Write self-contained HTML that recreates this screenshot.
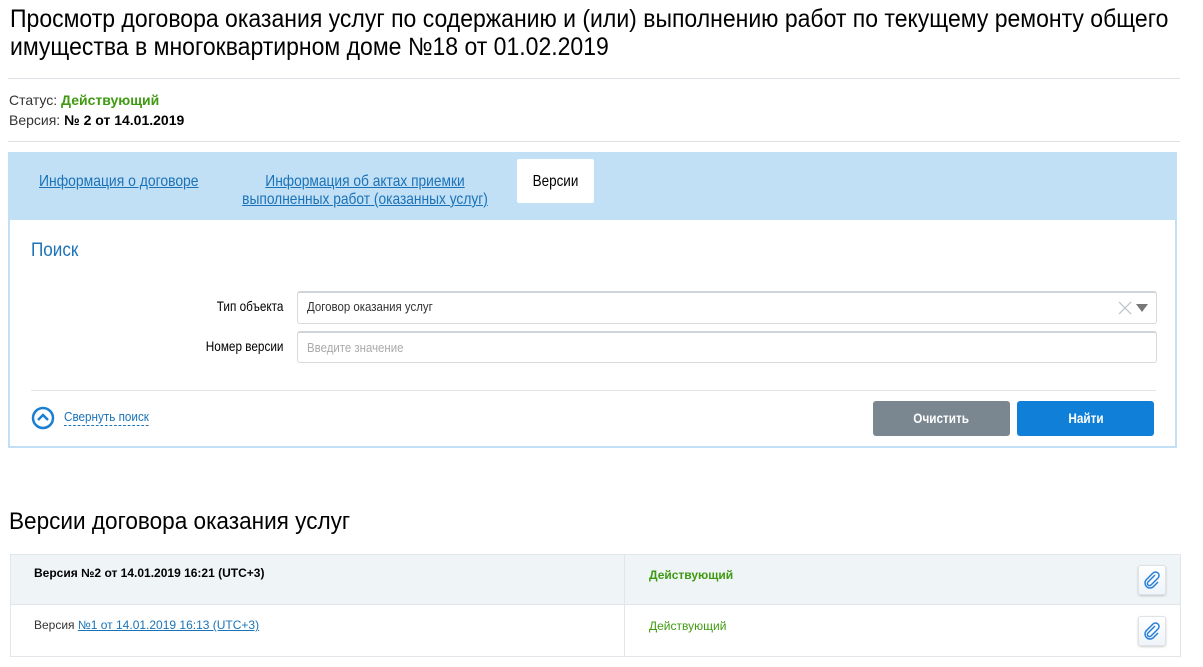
<!DOCTYPE html>
<html><head><meta charset="utf-8"><style>
*{box-sizing:border-box;margin:0;padding:0}
body{width:1203px;height:667px;background:#fff;font-family:"Liberation Sans",sans-serif;color:#000;position:relative;overflow:hidden}
.a{position:absolute;white-space:nowrap}
.c{transform:scaleX(.84);transform-origin:left top}
.cr{transform:scaleX(.84);transform-origin:right top}
.cc{transform:scaleX(.84);transform-origin:center top}
a{color:#1a73b8;text-decoration:underline}
.hr{position:absolute;height:1px;background:#dde1e5}
.inp{position:absolute;left:297px;width:860px;border:1px solid #d6dadd;border-top:2px solid #d0d4d7;border-radius:3px;background:#fff}
.btn{position:absolute;top:401px;height:35px;width:137px;border-radius:3px;color:#fff;font-weight:bold;font-size:14px;text-align:center;line-height:35px}
.clip{position:absolute;left:1138px;width:28px;height:30px;border:1px solid #dfe3e6;border-radius:3px;background:linear-gradient(#fff,#eef4fa);box-shadow:0 1px 2px rgba(0,0,0,.2)}
</style></head><body>
<div class="a" style="left:10px;top:5px;font-size:25px;line-height:28px;transform:scaleX(.92);transform-origin:left top">Просмотр договора оказания услуг по содержанию и (или) выполнению работ по текущему ремонту общего</div>
<div class="a" style="left:10px;top:33px;font-size:25px;line-height:28px;transform:scaleX(.92);transform-origin:left top">имущества в многоквартирном доме №18 от 01.02.2019</div>
<div class="hr" style="left:8px;top:78px;width:1172px"></div>
<div class="a" style="left:9px;top:92px;font-size:14px;color:#333">Статус: <b style="color:#3f9a11">Действующий</b></div>
<div class="a" style="left:9px;top:112px;font-size:14px;color:#333">Версия: <b style="color:#000">№ 2 от 14.01.2019</b></div>
<div class="hr" style="left:8px;top:141px;width:1172px"></div>

<div style="position:absolute;left:8px;top:152px;width:1169px;height:296px;border:2px solid #c3dff5;border-top:0;background:#fff"></div>
<div style="position:absolute;left:8px;top:152px;width:1169px;height:68px;background:#c1dff5"></div>
<div class="a" style="left:39px;top:173px;font-size:16px;transform:scaleX(.87);transform-origin:left top"><a>Информация о договоре</a></div>
<div class="a" style="left:215px;width:300px;text-align:center;top:173px;font-size:16px;line-height:18px;transform:scaleX(.86);transform-origin:center top"><a>Информация об актах приемки</a><br><a>выполненных работ (оказанных услуг)</a></div>
<div style="position:absolute;left:517px;top:159px;width:77px;height:44px;background:#fff;border-radius:2px"></div>
<div class="a cc" style="left:517px;width:77px;text-align:center;top:173px;font-size:16px">Версии</div>

<div class="a" style="left:31px;top:240px;font-size:19px;color:#1a73b8;transform:scaleX(.9);transform-origin:left top">Поиск</div>
<div class="a cr" style="right:920px;top:298px;font-size:14px">Тип объекта</div>
<div class="a cr" style="right:920px;top:338px;font-size:14px">Номер версии</div>
<div class="inp" style="top:291px;height:33px"></div>
<div class="a" style="left:307px;top:299px;font-size:13px;color:#333;transform:scaleX(.88);transform-origin:left top">Договор оказания услуг</div>
<svg class="a" style="left:1118px;top:301px" width="40" height="14"><path d="M1 1l12 12M13 1L1 13" stroke="#b8bfc5" stroke-width="1.2"/><path d="M18 3h12l-6 8z" fill="#777"/></svg>
<div class="inp" style="top:331px;height:32px"></div>
<div class="a" style="left:307px;top:340px;font-size:13px;color:#aaa;transform:scaleX(.88);transform-origin:left top">Введите значение</div>
<div class="hr" style="left:31px;top:390px;width:1125px;background:#e3e6e8"></div>
<svg class="a" style="left:31px;top:406px" width="24" height="24"><circle cx="12" cy="12" r="10" fill="none" stroke="#1a7fd1" stroke-width="2.5"/><path d="M7 14l5-5 5 5" fill="none" stroke="#1a7fd1" stroke-width="2.5"/></svg>
<div class="a" style="left:64px;top:409px;font-size:13px;color:#1a73b8;border-bottom:1px dashed #1a73b8;line-height:16px;transform:scaleX(.9);transform-origin:left top">Свернуть поиск</div>
<div class="btn" style="left:873px;background:#7b8790"><span style="display:inline-block" class="cc">Очистить</span></div>
<div class="btn" style="left:1017px;background:#0f7fd7"><span style="display:inline-block" class="cc">Найти</span></div>

<div class="a" style="left:9px;top:508px;font-size:24px;transform:scaleX(.94);transform-origin:left top">Версии договора оказания услуг</div>
<div style="position:absolute;left:10px;top:554px;width:1171px;height:103px;border:1px solid #e2e6ea"></div>
<div style="position:absolute;left:11px;top:555px;width:1169px;height:50px;background:#eff4f7;border-bottom:1px solid #e2e6ea"></div>
<div style="position:absolute;left:624px;top:555px;width:1px;height:101px;background:#e2e6ea"></div>
<div class="a" style="left:34px;top:566px;font-size:12px;font-weight:bold">Версия №2 от 14.01.2019 16:21 (UTC+3)</div>
<div class="a" style="left:34px;top:618px;font-size:12px;color:#333">Версия <a>№1 от 14.01.2019 16:13 (UTC+3)</a></div>
<div class="a" style="left:649px;top:568px;font-size:12px;font-weight:bold;color:#3f9a11">Действующий</div>
<div class="a" style="left:649px;top:619px;font-size:12px;color:#3f9a11">Действующий</div>
<div class="clip" style="top:565px"></div><div class="clip" style="top:616px"></div>
<svg class="a" style="left:1143px;top:571px" width="18" height="18"><path d="M12 4L5 11a2 2 0 0 0 3 3l7-7a3.5 3.5 0 0 0-5-5L3 9a5 5 0 0 0 7 7l5-5" fill="none" stroke="#2a7fd6" stroke-width="1.5"/></svg>
<svg class="a" style="left:1143px;top:622px" width="18" height="18"><path d="M12 4L5 11a2 2 0 0 0 3 3l7-7a3.5 3.5 0 0 0-5-5L3 9a5 5 0 0 0 7 7l5-5" fill="none" stroke="#2a7fd6" stroke-width="1.5"/></svg>
</body></html>
